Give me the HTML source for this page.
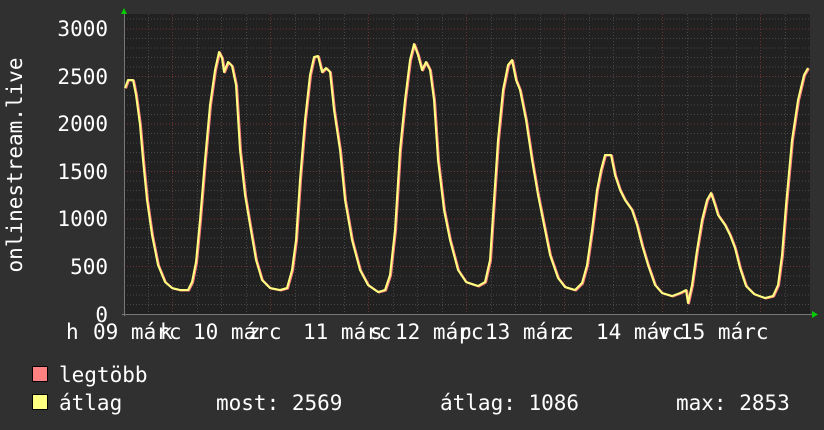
<!DOCTYPE html>
<html><head><meta charset="utf-8"><style>
html,body{margin:0;padding:0;background:#303030;}
svg{display:block}
text{font-family:"DejaVu Sans Mono","Liberation Mono",monospace;fill:#ffffff;font-size:21px}
</style></head><body>
<svg width="824" height="430" xmlns="http://www.w3.org/2000/svg">
<defs>
<polyline id="c" points="125,88 128,80 133,80 136,95 140,125 143,160 147,200 152,235 158,265 165,282 172,288 180,290 188,290 192,282 196,262 200,220 205,160 210,105 215,70 219,52 222,58 224,72 228,62 232,66 236,85 240,150 245,195 250,225 256,260 262,280 270,288 280,290 287,288 292,270 296,240 300,180 305,120 310,75 314,57 318,56 322,72 326,68 330,72 334,110 340,150 345,200 352,240 360,270 368,285 378,292 385,290 390,275 395,230 400,150 405,100 410,60 414,44 418,55 422,70 426,62 430,70 434,100 438,160 444,210 450,240 458,270 466,282 478,286 485,282 490,260 494,200 498,140 503,90 508,65 512,60 516,80 520,90 526,120 532,160 538,195 544,225 550,255 558,278 565,287 575,290 582,283 587,265 592,230 597,190 601,170 605,155 611,155 615,175 620,190 625,200 632,210 637,225 642,245 648,265 655,285 662,293 672,296 680,293 686,290 688,303 692,285 697,250 702,220 707,200 711,193 715,205 718,215 725,225 730,235 735,248 740,268 746,286 754,294 765,298 773,296 778,285 782,255 786,205 792,140 798,100 804,75 808,68"/>
</defs>
<rect width="824" height="430" fill="#303030"/>
<rect x="124" y="14" width="686" height="301" fill="#212121"/>
<g stroke="#474747" stroke-width="1" stroke-dasharray="1,2">
<line x1="124" x2="810" y1="304.5" y2="304.5"/><line x1="124" x2="810" y1="295" y2="295"/><line x1="124" x2="810" y1="285.5" y2="285.5"/><line x1="124" x2="810" y1="276" y2="276"/>
<line x1="124" x2="810" y1="257" y2="257"/><line x1="124" x2="810" y1="247.5" y2="247.5"/><line x1="124" x2="810" y1="238" y2="238"/><line x1="124" x2="810" y1="228.5" y2="228.5"/>
<line x1="124" x2="810" y1="209.5" y2="209.5"/><line x1="124" x2="810" y1="200" y2="200"/><line x1="124" x2="810" y1="190.5" y2="190.5"/><line x1="124" x2="810" y1="181" y2="181"/>
<line x1="124" x2="810" y1="162" y2="162"/><line x1="124" x2="810" y1="152.5" y2="152.5"/><line x1="124" x2="810" y1="143" y2="143"/><line x1="124" x2="810" y1="133.5" y2="133.5"/>
<line x1="124" x2="810" y1="114.5" y2="114.5"/><line x1="124" x2="810" y1="105" y2="105"/><line x1="124" x2="810" y1="95.5" y2="95.5"/><line x1="124" x2="810" y1="86" y2="86"/>
<line x1="124" x2="810" y1="67" y2="67"/><line x1="124" x2="810" y1="57.5" y2="57.5"/><line x1="124" x2="810" y1="48" y2="48"/><line x1="124" x2="810" y1="38.5" y2="38.5"/>
<line x1="124" x2="810" y1="19" y2="19"/>
<line y1="14" y2="315" x1="148.5" x2="148.5"/><line y1="14" y2="315" x1="197.5" x2="197.5"/><line y1="14" y2="315" x1="221.5" x2="221.5"/><line y1="14" y2="315" x1="246.5" x2="246.5"/>
<line y1="14" y2="315" x1="295.5" x2="295.5"/><line y1="14" y2="315" x1="319.5" x2="319.5"/><line y1="14" y2="315" x1="344.5" x2="344.5"/>
<line y1="14" y2="315" x1="393.5" x2="393.5"/><line y1="14" y2="315" x1="417.5" x2="417.5"/><line y1="14" y2="315" x1="442.5" x2="442.5"/>
<line y1="14" y2="315" x1="491.5" x2="491.5"/><line y1="14" y2="315" x1="515.5" x2="515.5"/><line y1="14" y2="315" x1="540.5" x2="540.5"/>
<line y1="14" y2="315" x1="589.5" x2="589.5"/><line y1="14" y2="315" x1="613.5" x2="613.5"/><line y1="14" y2="315" x1="638.5" x2="638.5"/>
<line y1="14" y2="315" x1="687.5" x2="687.5"/><line y1="14" y2="315" x1="711.5" x2="711.5"/><line y1="14" y2="315" x1="736.5" x2="736.5"/>
<line y1="14" y2="315" x1="785.5" x2="785.5"/>
</g>
<g stroke="#6e3434" stroke-width="1" stroke-dasharray="1,2">
<line x1="124" x2="810" y1="266.5" y2="266.5"/><line x1="124" x2="810" y1="219" y2="219"/><line x1="124" x2="810" y1="171.5" y2="171.5"/><line x1="124" x2="810" y1="124" y2="124"/><line x1="124" x2="810" y1="76.5" y2="76.5"/><line x1="124" x2="810" y1="29" y2="29"/>
<line y1="14" y2="315" x1="172.5" x2="172.5"/><line y1="14" y2="315" x1="270.5" x2="270.5"/><line y1="14" y2="315" x1="368.5" x2="368.5"/><line y1="14" y2="315" x1="466.5" x2="466.5"/><line y1="14" y2="315" x1="564.5" x2="564.5"/><line y1="14" y2="315" x1="662.5" x2="662.5"/><line y1="14" y2="315" x1="760.5" x2="760.5"/>
</g>
<line x1="124.5" y1="12" x2="124.5" y2="316" stroke="#777" stroke-width="1"/>
<line x1="122" y1="314.5" x2="812" y2="314.5" stroke="#777" stroke-width="1"/>
<polygon points="121,14 127,14 124,8" fill="#00cc00"/>
<polygon points="812,311 812,318 818,314.5" fill="#00cc00"/>
<g fill="none" stroke-linejoin="round">
<use href="#c" stroke="#ff8080" stroke-width="2" transform="translate(1,0.5)"/>
<use href="#c" stroke="#ffff80" stroke-width="2"/>
</g>
<g text-anchor="end">
<text x="108" y="36">3000</text><text x="108" y="84">2500</text><text x="108" y="131">2000</text><text x="108" y="179">1500</text><text x="108" y="226">1000</text><text x="108" y="274">500</text><text x="108" y="322">0</text>
</g>
<text transform="translate(22,165) rotate(-90)" text-anchor="middle" font-size="22">onlinestream.live</text>
<g>
<text x="66" y="339">h</text><text x="93" y="339">09 márc</text><text x="160" y="339" font-size="19">k</text>
<text x="193" y="339">10 márc</text><text x="248" y="339" font-size="19">z</text>
<text x="303" y="339">11 márc</text><text x="370" y="339" font-size="19">s</text>
<text x="395" y="339">12 márc</text><text x="459" y="339" font-size="19">p</text>
<text x="485" y="339">13 márc</text><text x="555" y="339" font-size="19">z</text>
<text x="596" y="339">14 márc</text><text x="658" y="339" font-size="19">v</text>
<text x="680" y="339">15 márc</text>
</g>
<rect x="32.5" y="366.5" width="15" height="15" fill="#ff8080" stroke="#000"/>
<rect x="32.5" y="394.5" width="15" height="15" fill="#ffff80" stroke="#000"/>
<text x="59" y="382">legtöbb</text>
<text x="59" y="410">átlag</text>
<text x="216" y="410">most: 2569</text>
<text x="440" y="410">átlag: 1086</text>
<text x="676" y="410">max: 2853</text>
</svg>
</body></html>
